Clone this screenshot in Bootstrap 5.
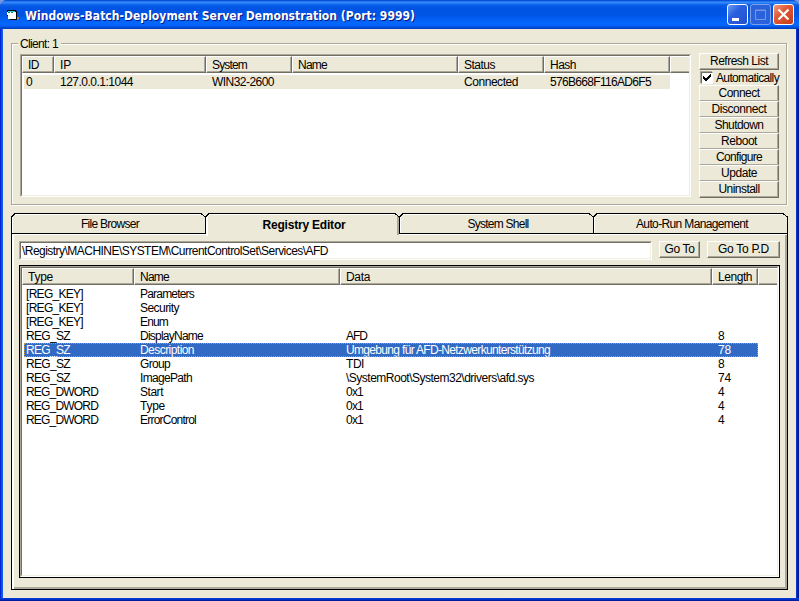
<!DOCTYPE html>
<html lang="en">
<head>
<meta charset="utf-8">
<title>Windows-Batch-Deployment Server Demonstration</title>
<link href="https://cdn.jsdelivr.net/npm/bootstrap@5.3.0/dist/css/bootstrap.min.css" rel="stylesheet">
<style>
:root{--face:#ece9d8;--shade:#aca899;--dark:#716f64;--soft:#f1efe2}
body{font:12px/14px "Liberation Sans",Arial,sans-serif;color:#000;background:#7a96df;width:799px;height:601px;overflow:hidden;white-space:nowrap}
.win{width:799px;height:601px;background:linear-gradient(90deg,#0019cf 0,#0831d9 1px,#166aee 2px,#0855dd 3px,#0855dd 795px,#0441d8 796px,#0029c0 797px,#001590 798px);border-radius:7px 7px 0 0;overflow:hidden}
.titlebar{height:29px;padding:0 5px;background:linear-gradient(#0a45c8 0,#0a5be0 1px,#3a93ff 2px,#2a80f8 3px,#0a5fe8 5px,#0054e3 8px,#0055e5 15px,#0262f5 20px,#0668ff 24px,#0660f5 26px,#0351dc 27px,#003cbc 29px)}
.titletext{font:bold 12px/18px "DejaVu Sans Condensed","DejaVu Sans",sans-serif;font-stretch:condensed;color:#fff;text-shadow:1px 1px 0 #0a1883;margin-left:5px;padding-top:2px}
.cap{width:21px;height:21px}
.caps{gap:2px}
.client{height:569px;margin:0 3px;padding:14px 8px 8px;background:var(--face);position:relative}
.bottomedge{height:3px;background:linear-gradient(#0441d8,#0029c0 60%,#001590)}
.group{height:162px;border:1px solid var(--shade);box-shadow:inset 1px 1px #fff,1px 1px #fff;margin-right:1px;padding:10px 7px 0 8px;position:relative}
.legendtext{position:absolute;left:6px;top:-7px;background:var(--face);padding:0 3px 0 2px;line-height:14px}
.sunk{border:1px solid;border-color:var(--shade) #fff #fff var(--shade)}
.sunk>.inner{border:1px solid;border-color:var(--dark) var(--soft) var(--soft) var(--dark);background:#fff;height:100%;overflow:hidden}
.list1{width:671px;height:143px}
.list2{height:313px;border:1px solid #000;margin:5px 0 0}
.list2 .sunk{height:100%}
.g1{display:grid;grid-template-columns:32px 152px 86px 166px 86px 126px 19px}
.g2{display:grid;grid-template-columns:112px 206px 372px 46px 19px}
.rows{padding-top:2px}
.hd>div{height:17px;background:var(--face);border-top:1px solid #fff;border-left:1px solid #fff;border-right:1px solid var(--dark);border-bottom:1px solid var(--dark);box-shadow:inset -1px -1px var(--shade);padding-left:5px;line-height:17px}
.hd>div:last-child{border-right:0;box-shadow:inset 0 -1px var(--shade)}
.rw>div{height:14px;padding-left:6px}
.rw>div:first-child{padding-left:4px}
.picked{position:relative;color:#fff;background:linear-gradient(#316ac5,#316ac5) 2px 0/734px 14px no-repeat}
.picked::after{content:"";position:absolute;left:2px;top:0;width:734px;height:14px;border:1px dotted #ce953a}
.idle{background:linear-gradient(var(--face),var(--face)) 2px 0/646px 14px no-repeat}
.xb{border:1px solid;border-color:#fff var(--dark) var(--dark) #fff;box-shadow:inset -1px -1px var(--shade);background:var(--face);text-align:center;height:17px;line-height:15px;padding:0}
.go1{width:41px;margin-left:7px}
.go2{width:73px;margin-left:7px}
.side{width:81px;margin-left:8px;margin-top:-1px}
.stack .xb{height:16px;border-bottom-color:var(--shade);box-shadow:inset -1px 0 var(--shade);line-height:15px}
.stack .xb:last-child{height:17px;border-bottom-color:var(--dark);box-shadow:inset -1px -1px var(--shade)}
.auto{padding:2px 0 0 2px;height:15px}
.auto span{margin:-1px 0 0 3px}
.chk{width:12px;height:12px;flex:none;background:#fff;border:1px solid;border-color:var(--dark) #fff #fff var(--dark);box-shadow:-1px -1px var(--shade)}
.tabs{height:21px;margin-top:8px;position:relative;width:777px}
.tabs svg{position:absolute;left:0;top:0}
.tabs .tabname{position:relative;width:194px;text-align:center;line-height:23px;padding-left:4px}
.tabs .fw-bold{padding-top:1px}
.pane{width:777px;height:356px;border:1px solid #000;border-top:0;box-shadow:inset 2px 0 #fff,inset -2px -2px var(--shade);padding:7px 7px 0}
.path{width:633px;height:19px}
.path .inner{padding-left:1px;line-height:16px}
</style>
<script src="https://cdn.jsdelivr.net/npm/bootstrap@5.3.0/dist/js/bootstrap.bundle.min.js"></script>
</head>
<body>
<div class="win">
  <div class="titlebar d-flex align-items-center">
    <svg width="15" height="15" viewBox="0 0 15 15" shape-rendering="crispEdges">
      <path d="M2 3h9v1h1v9H5v-1H3V9H2z" fill="#000"/>
      <path d="M3 4h7v1H3z" fill="#3cc"/><path d="M2 5h9v3H2zM3 8h8v4H3z" fill="#fff"/>
      <path d="M3 5h2v1H3zM6 5h2v1H6z" fill="#088"/>
      <path d="M12 10h2v2h-1v1h-1z" fill="#a98a4a"/>
    </svg>
    <div class="titletext flex-grow-1"><span data-w="390">Windows-Batch-Deployment Server Demonstration (Port: 9999)</span></div>
    <div class="d-flex caps">
      <svg class="cap" viewBox="0 0 21 21"><defs><linearGradient id="b" x2="1" y2="1"><stop stop-color="#6f9ff5"/><stop offset=".4" stop-color="#2a5fe0"/><stop offset="1" stop-color="#2450c8"/></linearGradient><linearGradient id="r" x2="1" y2="1"><stop stop-color="#f0a088"/><stop offset=".4" stop-color="#e05a38"/><stop offset="1" stop-color="#c03c14"/></linearGradient></defs><rect x=".5" y=".5" width="20" height="20" rx="2.5" fill="url(#b)" stroke="#fff"/><path d="M5 14h7v3H5z" fill="#fff"/></svg>
      <svg class="cap" viewBox="0 0 21 21"><rect x=".5" y=".5" width="20" height="20" rx="2.5" fill="#2a62dc" stroke="#7d9fe8"/><path d="M5.5 6h10v9.500h-10zM5 6.500h11" fill="none" stroke="#7795e0"/></svg>
      <svg class="cap" viewBox="0 0 21 21"><rect x=".5" y=".5" width="20" height="20" rx="2.5" fill="url(#r)" stroke="#fff"/><path d="M5.500 5.500l10 10M15.500 5.500l-10 10" stroke="#fff" stroke-width="2.200"/></svg>
    </div>
  </div>
  <div class="client">
    <div class="group d-flex">
      <div class="legendtext"><span data-w="38">Client: 1</span></div>
      <div class="sunk list1"><div class="inner">
        <div class="g1 hd"><div><span data-w="11">ID</span></div><div><span data-w="11">IP</span></div><div><span data-w="35">System</span></div><div><span data-w="29">Name</span></div><div><span data-w="31">Status</span></div><div><span data-w="26">Hash</span></div><div></div></div>
        <div class="rows"><div class="g1 rw idle"><div>0</div><div><span data-w="73">127.0.0.1:1044</span></div><div><span data-w="62">WIN32-2600</span></div><div></div><div><span data-w="54">Connected</span></div><div><span data-w="101">576B668F116AD6F5</span></div></div></div>
      </div></div>
      <div class="side">
        <div class="xb"><span data-w="58">Refresh List</span></div>
        <div class="d-flex auto"><div class="chk"><svg class="d-block" width="10" height="10" shape-rendering="crispEdges"><path d="M1 3v3l2 2h1l5-5V0L4 5H3z" fill="#000"/></svg></div><span data-w="63">Automatically</span></div>
        <div class="stack"><div class="xb"><span data-w="41">Connect</span></div><div class="xb"><span data-w="55">Disconnect</span></div><div class="xb"><span data-w="49">Shutdown</span></div><div class="xb"><span data-w="36">Reboot</span></div><div class="xb"><span data-w="46">Configure</span></div><div class="xb"><span data-w="36">Update</span></div><div class="xb"><span data-w="41">Uninstall</span></div></div>
      </div>
    </div>
    <div class="tabs d-flex">
      <svg width="777" height="23" shape-rendering="crispEdges" fill="none">
        <path d="M3 1.500H191M391 1.500H579M585 1.500H773M1.500 4V20M389.500 4V20M583.500 4V20M0 21.500H195M387 21.500H776M195.500 23V4L198 1.500H385" stroke="#fff"/>
        <path d="M196.500 23V4" stroke="#fff"/>
        <path d="M386.500 3V22M387.500 4V22" stroke="#aca899"/>
        <path d="M.5 21V4L4 .5H190L194.500 4V20.500M194.500 4L198 .5H384L388.500 4V20.500M388.500 4L392 .5H578L582.500 4V20.500M582.500 4L586 .5H772L776.500 4V23M0 20.500H194M388 20.500H777M.5 20V23" stroke="#000"/>
      </svg>
      <div class="tabname"><span data-w="58">File Browser</span></div><div class="tabname fw-bold"><span data-w="83">Registry Editor</span></div><div class="tabname"><span data-w="61">System Shell</span></div><div class="tabname"><span data-w="112">Auto-Run Management</span></div>
    </div>
    <div class="pane">
      <div class="d-flex align-items-start">
        <div class="sunk path"><div class="inner"><span data-w="306">\Registry\MACHINE\SYSTEM\CurrentControlSet\Services\AFD</span></div></div>
        <div class="xb go1"><span data-w="30">Go To</span></div>
        <div class="xb go2"><span data-w="51">Go To P.D</span></div>
      </div>
      <div class="list2"><div class="sunk"><div class="inner">
        <div class="g2 hd"><div><span data-w="25">Type</span></div><div><span data-w="29">Name</span></div><div><span data-w="24">Data</span></div><div><span data-w="34">Length</span></div><div></div></div>
        <div class="rows">
        <div class="g2 rw"><div><span data-w="57">[REG_KEY]</span></div><div><span data-w="54">Parameters</span></div></div>
        <div class="g2 rw"><div><span data-w="57">[REG_KEY]</span></div><div><span data-w="39">Security</span></div></div>
        <div class="g2 rw"><div><span data-w="57">[REG_KEY]</span></div><div><span data-w="28">Enum</span></div></div>
        <div class="g2 rw"><div><span data-w="44">REG_SZ</span></div><div><span data-w="63">DisplayName</span></div><div><span data-w="21">AFD</span></div><div>8</div></div>
        <div class="g2 rw picked"><div><span data-w="44">REG_SZ</span></div><div><span data-w="54">Description</span></div><div><span data-w="204">Umgebung für AFD-Netzwerkunterstützung</span></div><div><span data-w="13">78</span></div></div>
        <div class="g2 rw"><div><span data-w="44">REG_SZ</span></div><div><span data-w="30">Group</span></div><div><span data-w="18">TDI</span></div><div>8</div></div>
        <div class="g2 rw"><div><span data-w="44">REG_SZ</span></div><div><span data-w="52">ImagePath</span></div><div><span data-w="188">\SystemRoot\System32\drivers\afd.sys</span></div><div><span data-w="13">74</span></div></div>
        <div class="g2 rw"><div><span data-w="72">REG_DWORD</span></div><div><span data-w="23">Start</span></div><div><span data-w="17">0x1</span></div><div>4</div></div>
        <div class="g2 rw"><div><span data-w="72">REG_DWORD</span></div><div><span data-w="25">Type</span></div><div><span data-w="17">0x1</span></div><div>4</div></div>
        <div class="g2 rw"><div><span data-w="72">REG_DWORD</span></div><div><span data-w="56">ErrorControl</span></div><div><span data-w="17">0x1</span></div><div>4</div></div>
        </div>
      </div></div></div>
    </div>
  </div>
  <div class="bottomedge"></div>
</div>
<script>
// Track each label so that it fills its nominal width in pixels.
document.querySelectorAll('[data-w]').forEach(el => {
  const gap = (el.dataset.w - el.getBoundingClientRect().width) / el.textContent.length;
  el.style.letterSpacing = gap.toFixed(3) + 'px';
});
</script>
</body>
</html>
